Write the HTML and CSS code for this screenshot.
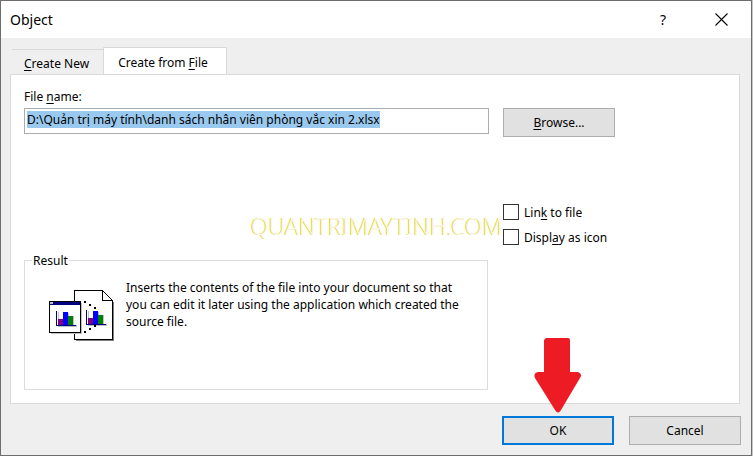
FILE: index.html
```html
<!DOCTYPE html>
<html lang="en">
<head>
  <meta charset="UTF-8">
  <meta name="viewport" content="width=device-width, initial-scale=1.0">
  <title>Object</title>
  <link rel="stylesheet" href="styles.css">
</head>
<body>
  <div class="dialog" role="dialog" aria-labelledby="dialogTitle">
    <header class="title-bar">
      <h1 id="dialogTitle">Object</h1>
      <button class="title-button" type="button" aria-label="Help">?</button>
      <button class="title-button" type="button" aria-label="Close">
        <svg width="13" height="13" viewBox="0 0 13 13" fill="none" stroke="#000" stroke-width="1.1">
          <path d="M0.5 0.5L12.5 12.5M12.5 0.5L0.5 12.5"/>
        </svg>
      </button>
    </header>

    <form class="dialog-body">
      <div class="tabs" role="tablist">
        <button class="tab" type="button" role="tab"><u>C</u>reate New</button>
        <button class="tab active" type="button" role="tab" aria-selected="true">Create from <u>F</u>ile</button>
      </div>

      <div class="panel">
        <div class="main-column">
          <label class="file-label" for="fileName">File <u>n</u>ame:</label>
          <input class="file-input" id="fileName" type="text" value="D:\Quản trị máy tính\danh sách nhân viên phòng vắc xin 2.xlsx" spellcheck="false">

          <fieldset class="result">
            <legend>Result</legend>
            <svg class="result-icon" width="66" height="52" viewBox="0 0 66 52" shape-rendering="crispEdges">
              <!-- document page -->
              <path d="M27 50H64V12H65V51H27Z" fill="#808080"/>
              <path d="M25.500 0.500H53.500L63.500 10.500V49.500H25.500Z" fill="#fff" stroke="#000"/>
              <path d="M53.500 0.500V10.500H63.500" fill="none" stroke="#000"/>
              <!-- embedded window -->
              <path d="M2 43H32V13H33V44H2Z" fill="#c0c0c0"/>
              <rect x="0.500" y="11.500" width="31" height="31" fill="#fff" stroke="#000"/>
              <rect x="1" y="12" width="30" height="3" fill="#000080"/>
              <rect x="1" y="12" width="3" height="2" fill="#c0c0c0"/>
              <g id="chart">
                <path d="M9 22H10V35H28V37H9ZM19 23H20V26H25V35H19Z" fill="#c0c0c0"/>
                <path d="M7 21H8V35H27V36H7Z" fill="#000080"/>
                <rect x="9" y="29" width="5" height="6" fill="#800080"/>
                <rect x="14" y="22" width="5" height="13" fill="#00f"/>
                <rect x="19" y="26" width="5" height="9" fill="#008000"/>
              </g>
              <use href="#chart" x="30" y="-1"/>
              <path d="M35 11h2v2h-2zM40 14h2v2h-2zM45 17h2v2h-2zM45 35h2v2h-2zM40 38h2v2h-2zM35 41h2v2h-2z" fill="#000"/>
            </svg>
            <p>Inserts the contents of the file into your document so that you can edit it later using the application which created the source file.</p>
          </fieldset>
        </div>

        <div class="side-column">
          <button class="button" type="button"><u>B</u>rowse...</button>
          <div class="options">
            <label class="option"><input type="checkbox"><span>Lin<u>k</u> to file</span></label>
            <label class="option"><input type="checkbox"><span>Displ<u>a</u>y as icon</span></label>
          </div>
        </div>

        <div class="watermark">QUANTRIMAYTINH.COM</div>
      </div>

      <div class="actions">
        <div class="ok-wrap">
          <button class="button default" type="submit">OK</button>
          <svg class="arrow" width="48" height="75" viewBox="0 0 48 75">
            <path d="M12 0H34Q36 0 36 2V34H44Q49 36 46 40L27 72Q24 77 21 72L1 40Q-1 35 4 34H10V2Z" fill="#ed1c24"/>
          </svg>
        </div>
        <button class="button" type="button">Cancel</button>
      </div>
    </form>
  </div>

  <script>
    // Select the path so it can be typed over
    const fileName = document.getElementById('fileName');
    fileName.focus();
    fileName.select();
  </script>
</body>
</html>
```
FILE: styles.css
```css
* {
  margin: 0;
  padding: 0;
  box-sizing: border-box;
}

body {
  background-color: #c8c8c8;
  color: #000;
  font-family: 'Noto Sans', 'Open Sans', sans-serif;
  font-size: 12px;
  line-height: 17px;
  padding-right: 1px;
}

button,
input {
  font: inherit;
  color: inherit;
}

u {
  text-underline-offset: 2px;
}

.dialog {
  min-height: 100vh;
  background-color: #efefef;
  border: 1px solid #6e6c6e;
}

/* Title bar */
.title-bar {
  display: flex;
  align-items: center;
  height: 37px;
  padding: 0 1px 0 9px;
  background-color: #fff;
}

.title-bar h1 {
  flex: 1;
  font-size: 14px;
  font-weight: 400;
}

.title-button {
  display: flex;
  align-items: center;
  justify-content: center;
  width: 58px;
  height: 37px;
  border: none;
  background: none;
  font-size: 14px;
}

.dialog-body {
  padding: 9px 10px 9px 9px;
}

/* Tabs */
.tabs {
  display: flex;
  align-items: flex-end;
  padding-left: 2px;
}

.tab {
  height: 25px;
  padding: 2px 14px 0 12px;
  border: none;
  border-top: 1px solid #d9d9d9;
  background: none;
}

.tab.active {
  position: relative;
  height: 28px;
  margin-bottom: -1px;
  padding: 2px 18px 0 14px;
  border: 1px solid #d9d9d9;
  border-bottom: none;
  background-color: #fff;
}

.panel {
  position: relative;
  display: flex;
  gap: 14px;
  margin-right: 1px;
  padding: 13px;
  border: 1px solid #d9d9d9;
  background-color: #fff;
}

.main-column {
  flex: 1;
  max-width: 465px;
}

.file-label {
  display: block;
  margin-bottom: 3px;
}

.file-input {
  display: block;
  width: 100%;
  height: 26px;
  padding: 2px 2px 5px;
  border: 1px solid #abadb3;
  outline: none;
  line-height: 17px;
}

.file-input::selection {
  background-color: #99c9ef;
  color: #000;
}

.result {
  display: flex;
  gap: 11px;
  min-height: 138px;
  margin: 118px 1px 0 0;
  padding: 9px 15px 16px 24px;
  border: 1px solid #dcdcdc;
}

.result legend {
  margin-left: -17px;
  padding: 0 1px;
}

.result-icon {
  flex: none;
  margin-top: 12px;
}

.result p {
  margin-top: 1px;
}

.side-column {
  padding-top: 20px;
}

.button {
  width: 112px;
  height: 29px;
  border: 1px solid #adadad;
  background-color: #e1e1e1;
}

.button.default {
  border: 2px solid #0078d7;
}

.options {
  display: flex;
  flex-direction: column;
  gap: 8px;
  margin-top: 67px;
}

.option {
  display: flex;
  align-items: flex-start;
  gap: 5px;
}

.option input {
  appearance: none;
  width: 16px;
  height: 16px;
  border: 1px solid #333;
  background-color: #fff;
}

.watermark {
  position: absolute;
  top: 137px;
  left: 240px;
  color: #fff5f5;
  font-size: 23px;
  font-weight: 300;
  line-height: 28px;
  text-shadow: -1px 0 #d8d800;
  pointer-events: none;
}

.actions {
  display: flex;
  justify-content: flex-end;
  gap: 15px;
  padding-top: 12px;
}

.ok-wrap {
  position: relative;
}

/* Pointer over the OK button */
.arrow {
  position: absolute;
  bottom: 32px;
  left: 32px;
  pointer-events: none;
}
```
